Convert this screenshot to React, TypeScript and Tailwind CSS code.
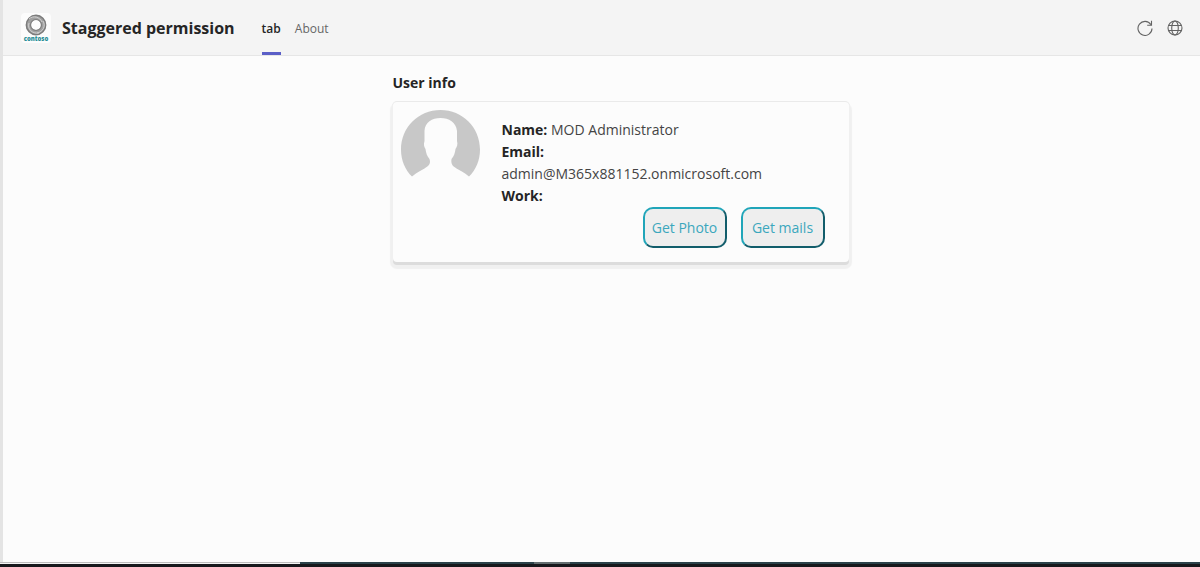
import type { ReactNode } from 'react';

function ContosoLogo() {
  return (
    <div className="flex h-[30px] w-[30px] flex-col items-center rounded bg-[#fcfcfc] pt-px">
      <svg viewBox="0 0 22 22" className="h-[22px] w-[22px] shrink-0" fill="none" aria-hidden="true">
        <circle cx="11" cy="11" r="7.500" stroke="#a0a0a0" strokeWidth="5" />
        <circle cx="11" cy="11" r="9.700" stroke="#7c7c7c" strokeWidth="1.400" />
        <circle cx="11" cy="11" r="5.500" stroke="#808080" strokeWidth="1.200" />
        <path d="M4 5C8 1 15 3 17 8M18 7c3 5 0 11-6 12M14 19C7 20 2 15 4 9" stroke="#d0d0d0" strokeWidth="1" />
      </svg>
      <span className="text-[6px] leading-[7px] font-extrabold text-[#2b8f98]">contoso</span>
    </div>
  );
}

function Avatar() {
  return (
    <svg viewBox="0 0 79 67" className="h-[67px] w-[79px] shrink-0" role="img" aria-label="Profile photo">
      <path
        fill="#c8c8c8"
        d="M11 66.500C4 60 0 50 0 39.500C0 17.500 17.500 0 39.500 0S79 17.500 79 39.500C79 50 75 60 68 66.500C63 62 57 60 52 56C50.500 54 50 52 50.500 49C53 46 54 43 54.500 39C56 37 57 34 56 31C56 28 56 25 56 21C55 12 48 8 39.500 8S24 12 23.500 21C23.500 25 23.500 28 23.500 31C22.500 34 23 37 24.500 39C25 43 26 46 28.500 49C29.500 52 29 54 27 56C22 60 16 62 11 66.500Z"
      />
    </svg>
  );
}

function RefreshIcon() {
  return (
    <svg viewBox="0 0 16 16" className="h-4 w-4" fill="none" stroke="#636363" strokeWidth="1.100" aria-hidden="true">
      <path d="M13.800 4.500A7 7 0 1 0 15 8.500M14.500 .8v4.400H10.200" />
    </svg>
  );
}

function GlobeIcon() {
  return (
    <svg viewBox="0 0 16 16" className="h-4 w-4" fill="none" stroke="#636363" strokeWidth="1.100" aria-hidden="true">
      <circle cx="8" cy="8" r="7" />
      <ellipse cx="8" cy="8" rx="3.300" ry="7" />
      <path d="M1.600 5.500h12.800M1.600 10.500h12.800" />
    </svg>
  );
}

function ActionButton({ children }: { children: ReactNode }) {
  return (
    <button
      type="button"
      className="h-[41px] w-[84px] rounded-[10px] border-2 border-t-[#20a5b9] border-r-[#125d6b] border-b-[#125d6b] border-l-[#20a5b9] bg-[#eeeeee] text-sm whitespace-nowrap text-[#3ba7bd]"
    >
      {children}
    </button>
  );
}

export default function App() {
  return (
    <div className="flex min-h-screen flex-col bg-[#fcfcfc] font-['Open_Sans','Noto_Sans',sans-serif] text-[#252525]">
      <div className="flex flex-1 flex-col border-l-3 border-[#e4e4e4]">
        <header className="flex h-14 items-stretch border-b border-[#e6e6e6] bg-[#f4f4f4] pr-[17px] pl-[18px]">
          <div className="flex items-center gap-[11px]">
            <ContosoLogo />
            <h1 className="text-base leading-6 font-bold whitespace-nowrap">Staggered permission</h1>
          </div>
          <nav className="ml-[27px] flex items-stretch gap-[14px] text-xs">
            <a href="#tab" aria-current="page" className="flex items-center border-b-3 border-[#5b5fc7] pt-[5px] font-semibold">
              tab
            </a>
            <a href="#about" className="flex items-center border-b-3 border-transparent pt-[5px] text-[#666666]">
              About
            </a>
          </nav>
          <div className="ml-auto flex items-center gap-[14px]">
            <button type="button" aria-label="Reload tab">
              <RefreshIcon />
            </button>
            <button type="button" aria-label="Go to website">
              <GlobeIcon />
            </button>
          </div>
        </header>

        <main className="flex flex-1 flex-col items-center pt-4">
          <section className="ml-[38px] w-[456px]">
            <h2 className="text-sm leading-[22px] font-bold">User info</h2>
            <div className="mt-2 flex items-start gap-[22px] rounded bg-[#fcfcfc] px-2 pt-2 pb-[14px] shadow-[0_3px_0_0_#dcdcdc,0_4px_1px_3px_#f0f0f0,0_0_0_1px_#eaeaea]">
              <Avatar />
              <div className="min-w-0 flex-1 pt-[9px] text-sm leading-[22px]">
                <p>
                  <b>Name:</b> <span className="text-[#444444]">MOD Administrator</span>
                </p>
                <p>
                  <b>Email:</b>
                </p>
                <p className="text-[#444444]">admin@M365x881152.onmicrosoft.com</p>
                <p>
                  <b>Work:</b>
                </p>
                <div className="flex justify-end gap-[14px] pr-4">
                  <ActionButton>Get Photo</ActionButton>
                  <ActionButton>Get mails</ActionButton>
                </div>
              </div>
            </div>
          </section>
        </main>
      </div>
      <footer className="bg-[#17181c] pb-[3px]">
        <div className="flex h-0.5 bg-[#2b424a]">
          <div className="w-1/4 border-t border-[#bdbdbd] bg-[#f4f4f4]" />
          <div className="ml-[19.5%] w-[3%] bg-[#646e70]" />
        </div>
      </footer>
    </div>
  );
}
